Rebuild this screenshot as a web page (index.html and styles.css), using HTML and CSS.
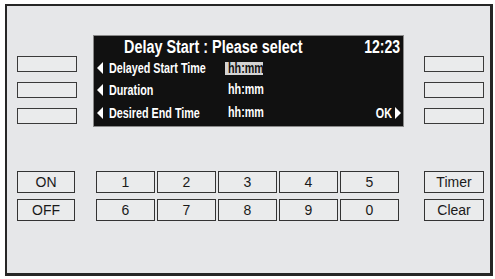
FILE: index.html
```html
<!DOCTYPE html>
<html>
<head>
<meta charset="utf-8">
<link rel="stylesheet" href="styles.css">
</head>
<body>
<div class="frame">
  <div class="top">
    <div class="side left">
      <div class="sbtn"></div>
      <div class="sbtn"></div>
      <div class="sbtn"></div>
    </div>
    <div class="screen">
      <div class="title">
        <span class="ttext"><span class="cn">Delay Start : Please select</span></span>
        <span class="clock"><span class="cn cr">12:23</span></span>
      </div>
      <div class="row r1">
        <span class="arrow-l"></span>
        <span class="label"><span class="cn">Delayed Start Time</span></span>
        <span class="val sel"><span class="cn">hh:mm</span></span>
      </div>
      <div class="row r2">
        <span class="arrow-l"></span>
        <span class="label"><span class="cn">Duration</span></span>
        <span class="val"><span class="cn">hh:mm</span></span>
      </div>
      <div class="row r3">
        <span class="arrow-l"></span>
        <span class="label"><span class="cn">Desired End Time</span></span>
        <span class="val"><span class="cn">hh:mm</span></span>
        <span class="ok"><span class="cn cr">OK</span></span>
        <span class="arrow-r"></span>
      </div>
    </div>
    <div class="side right">
      <div class="sbtn"></div>
      <div class="sbtn"></div>
      <div class="sbtn"></div>
    </div>
  </div>
  <div class="bottom">
    <div class="col onoff">
      <div class="btn">ON</div>
      <div class="btn">OFF</div>
    </div>
    <div class="pad">
      <div class="btn">1</div>
      <div class="btn">2</div>
      <div class="btn">3</div>
      <div class="btn">4</div>
      <div class="btn">5</div>
      <div class="btn">6</div>
      <div class="btn">7</div>
      <div class="btn">8</div>
      <div class="btn">9</div>
      <div class="btn">0</div>
    </div>
    <div class="col tc">
      <div class="btn">Timer</div>
      <div class="btn">Clear</div>
    </div>
  </div>
</div>
</body>
</html>
```

FILE: styles.css
```css
html, body {
  margin: 0;
  padding: 0;
  background: #ffffff;
}
body {
  font-family: "Liberation Sans", Arial, sans-serif;
}
.frame {
  box-sizing: border-box;
  margin: 4px 0 0 5px;
  width: 488px;
  height: 272px;
  border: 2px solid #262626;
  border-bottom-width: 3px;
  border-right-width: 3px;
  background: #e6e7e9;
  padding: 29px 0 0 10px;
}
.top {
  display: flex;
  align-items: flex-start;
}
.side {
  display: flex;
  flex-direction: column;
  gap: 10px;
  margin-top: 21px;
  width: 60px;
}
.side.right {
  margin-left: 20px;
}
.sbtn {
  box-sizing: border-box;
  height: 16px;
  border: 1px solid #3a3a3a;
  background: #eaebec;
}
.screen {
  box-sizing: border-box;
  margin-left: 16px;
  width: 311px;
  height: 92px;
  background: #111111;
  border: 1px solid #8a8a8a;
  color: #ffffff;
  font-family: "Liberation Sans", Arial, sans-serif;
  font-weight: bold;
  padding: 0 2px 0 3px;
  white-space: nowrap;
}
.cn {
  display: inline-block;
  transform: scaleX(0.77);
  transform-origin: left center;
}
.cn.cr {
  transform-origin: right center;
}
.title .cn {
  transform: scaleX(0.8);
}
.title .cn.cr {
  transform: scaleX(0.78);
}
.title {
  display: flex;
  align-items: center;
  height: 22px;
  font-size: 18px;
  padding-left: 27px;
}
.ttext {
  flex: 1;
}
.clock {
  padding-right: 1px;
}
.row {
  display: flex;
  align-items: center;
  font-size: 14px;
  height: 23px;
}
.r1 {
  height: 20px;
}
.arrow-l {
  flex-shrink: 0;
  width: 0;
  height: 0;
  border-top: 6px solid transparent;
  border-bottom: 6px solid transparent;
  border-right: 6px solid #ffffff;
  margin-right: 6px;
}
.arrow-r {
  flex-shrink: 0;
  width: 0;
  height: 0;
  border-top: 6px solid transparent;
  border-bottom: 6px solid transparent;
  border-left: 6px solid #ffffff;
  margin-left: 3px;
}
.label {
  flex-shrink: 0;
  width: 116px;
}
.val {
  flex-shrink: 0;
  display: flex;
  box-sizing: border-box;
  width: 38px;
  height: 13px;
  align-items: center;
  padding: 0 0 0 3px;
}
.val .cn {
  line-height: 13px;
  margin-right: -10px;
}
.val.sel {
  background: #d4d4d4;
  color: #111111;
}
.ok {
  margin-left: auto;
}
.bottom {
  display: flex;
  align-items: flex-start;
  margin-top: 44px;
}
.col {
  display: flex;
  flex-direction: column;
  gap: 6px;
}
.onoff {
  width: 58px;
}
.tc {
  width: 60px;
  margin-left: 25px;
}
.pad {
  display: grid;
  grid-template-columns: repeat(5, 59px);
  column-gap: 2px;
  row-gap: 6px;
  margin-left: 21px;
}
.btn {
  box-sizing: border-box;
  height: 22px;
  border: 1.5px solid #333333;
  background: #eaebec;
  display: flex;
  align-items: center;
  justify-content: center;
  font-size: 14px;
  color: #1a1a1a;
}
```
